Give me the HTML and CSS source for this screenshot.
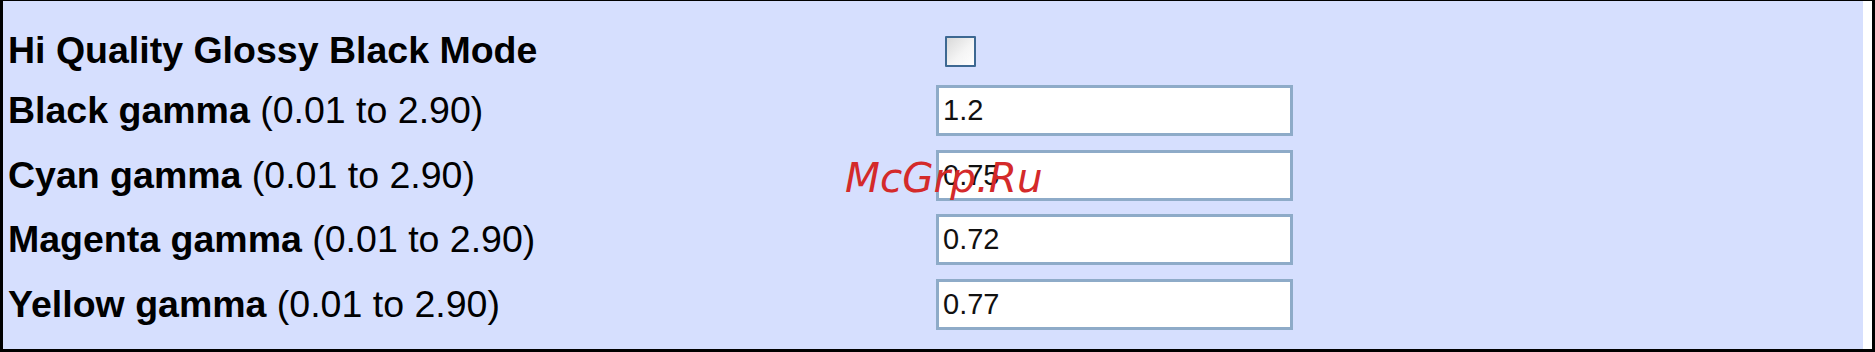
FILE: index.html
```html
<!DOCTYPE html>
<html lang="en">
<head>
    <meta charset="UTF-8">
    <title>Print Quality</title>
    <link rel="stylesheet" href="styles.css">
</head>
<body>
<div class="frame">
    <div class="panel">
        <div class="row row-first">
            <label class="label" for="glossy"><b>Hi Quality Glossy Black Mode</b></label>
            <input class="check" type="checkbox" id="glossy">
        </div>
        <div class="row">
            <label class="label" for="black"><b>Black gamma</b> (0.01 to 2.90)</label>
            <input class="field" type="text" id="black" value="1.2">
        </div>
        <div class="row">
            <label class="label" for="cyan"><b>Cyan gamma</b> (0.01 to 2.90)</label>
            <input class="field" type="text" id="cyan" value="0.75">
        </div>
        <div class="row">
            <label class="label" for="magenta"><b>Magenta gamma</b> (0.01 to 2.90)</label>
            <input class="field" type="text" id="magenta" value="0.72">
        </div>
        <div class="row">
            <label class="label" for="yellow"><b>Yellow gamma</b> (0.01 to 2.90)</label>
            <input class="field" type="text" id="yellow" value="0.77">
        </div>
        <div class="watermark">McGrp.Ru</div>
    </div>
</div>
</body>
</html>
```

FILE: styles.css
```css
* {
    box-sizing: border-box;
}

body {
    margin: 0;
    padding: 0;
    background: #000;
}

/* black outline with the white strip on the right */
.frame {
    width: 1875px;
    height: 352px;
    border-style: solid;
    border-color: #000;
    border-width: 1px 3px 3px 3px;
    background: #fff;
    padding-right: 9px;
}

.panel {
    position: relative;
    height: 100%;
    background: #d6dffe;
    padding: 29px 0 0 5px;
    display: flex;
    flex-direction: column;
    gap: 13.5px;
    font-family: "Liberation Sans", Arial, sans-serif;
    color: #000;
}

.row {
    display: grid;
    grid-template-columns: 928px 357px;
    align-items: center;
    height: 51px;
}

.row-first {
    height: 41.5px;
    align-items: start;
}

.label {
    font-size: 37.5px;
    line-height: 41px;
    white-space: nowrap;
}

.label b {
    font-weight: bold;
}

.check {
    appearance: none;
    -webkit-appearance: none;
    margin: 6px 0 0 9px;
    width: 31px;
    height: 31px;
    border: 2px solid #3d6892;
    border-radius: 1px;
    background: linear-gradient(135deg, #d9d9d9 0%, #f4f4f4 55%, #ffffff 100%);
}

.field {
    margin: 0;
    width: 357px;
    height: 51px;
    border: 3px solid #8eabc8;
    background: #fff;
    padding: 0 4px;
    font-family: "Liberation Sans", Arial, sans-serif;
    font-size: 29px;
    color: #111;
    outline: none;
}

.watermark {
    position: absolute;
    left: 842px;
    top: 157px;
    font-family: "DejaVu Sans", sans-serif;
    font-style: oblique;
    font-size: 40.5px;
    line-height: 40px;
    color: #d42a2a;
    pointer-events: none;
}
```
